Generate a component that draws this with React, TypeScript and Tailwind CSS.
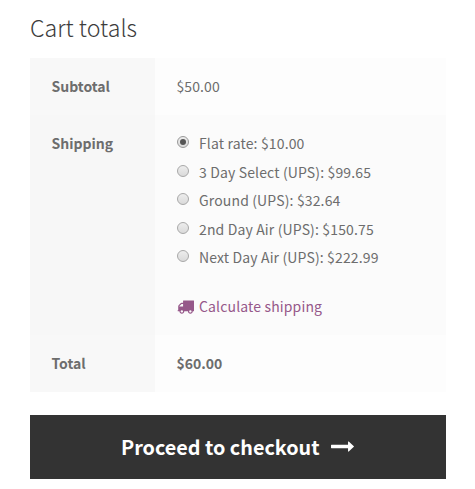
import React, { useState } from 'react';
import clsx from 'clsx';

interface ShippingMethod {
  id: string;
  label: string;
  price: string;
}

const shippingMethods: ShippingMethod[] = [
  { id: 'flat_rate', label: 'Flat rate', price: '$10.00' },
  { id: 'ups_3day', label: '3 Day Select (UPS)', price: '$99.65' },
  { id: 'ups_ground', label: 'Ground (UPS)', price: '$32.64' },
  { id: 'ups_2nd_day', label: '2nd Day Air (UPS)', price: '$150.75' },
  { id: 'ups_next_day', label: 'Next Day Air (UPS)', price: '$222.99' },
];

const TruckIcon: React.FC<{ className?: string }> = ({ className }) => (
  <svg viewBox="0 0 1792 1792" fill="currentColor" className={className}>
    <path d="M640 1408q0-52-38-90t-90-38-90 38-38 90 38 90 90 38 90-38 38-90zm-384-512h384v-256h-158q-13 0-22 9l-195 195q-9 9-9 22v30zm1280 512q0-52-38-90t-90-38-90 38-38 90 38 90 90 38 90-38 38-90zm256-1088v1024q0 15-4 26.5t-13.5 18.5-16.5 11.5-23.5 6-22.5 2-25.5 0-22.5-.5q0 106-75 181t-181 75-181-75-75-181h-384q0 106-75 181t-181 75-181-75-75-181h-64q-3 0-22.5.5t-25.5 0-22.5-2-23.5-6-16.5-11.5-13.5-18.5-4-26.5q0-26 19-45t45-19v-320q0-8-.5-35t0-38 2.5-34.5 6.5-37 14-30.5 22.5-30l198-198q19-19 50.5-32t58.5-13h160v-192q0-26 19-45t45-19h1024q26 0 45 19t19 45z" />
  </svg>
);

const LongArrowIcon: React.FC<{ className?: string }> = ({ className }) => (
  <svg viewBox="0 480 1728 832" fill="currentColor" className={className}>
    <path d="M1728 893q0 14-10 24l-384 354q-16 14-35 6-19-9-19-29v-224h-1248q-14 0-23-9t-9-23v-192q0-14 9-23t23-9h1248v-224q0-21 19-29t35 5l384 350q10 10 10 23z" />
  </svg>
);

const Radio: React.FC<{ checked: boolean }> = ({ checked }) => (
  <span
    className={clsx(
      'mb-[2px] flex h-3 w-3 items-center justify-center rounded-full border bg-linear-to-b from-[#ededed] to-[#dadada]',
      checked ? 'border-[#999]' : 'border-[#a8a8a8]'
    )}
  >
    {checked && <span className="h-1.5 w-1.5 rounded-full bg-[#555]" />}
  </span>
);

export default function App() {
  const [selected, setSelected] = useState('flat_rate');

  return (
    <div className="h-[489px] w-[475px] bg-white pl-[30px] font-['Noto_Sans_CJK_SC',sans-serif] text-[14px] text-[#6d6d6d]">
      <h2 className="h-[58px] pt-[9px] font-['Noto_Sans_CJK_SC_Light','Noto_Sans_CJK_SC',sans-serif] text-[23.2px] font-extralight leading-[36px] text-[#3c3c3c]">Cart totals</h2>

      <div className="grid w-[416px] grid-cols-[125px_1fr] grid-rows-[57px_220px_57px]">
        <div className="bg-[#f8f8f8] pl-[21.5px] pt-[15px] font-bold leading-[26px]">Subtotal</div>
        <div className="bg-[#fdfdfd] pl-[21.5px] pt-[15px] leading-[26px] tracking-[0.1px]">$50.00</div>

        <div className="bg-[#f7f7f7] pl-[21.5px] pt-[15px] font-bold leading-[26px]">Shipping</div>
        <div className="bg-[#fbfbfb] pl-[22px] pt-[15px] tracking-[0.14px]">
          <ul className="h-[143px]">
            {shippingMethods.map(method => (
              <li key={method.id} className="h-[28.6px]">
                <button onClick={() => setSelected(method.id)} className="flex h-[26px] items-center gap-[10px] whitespace-nowrap">
                  <Radio checked={selected === method.id} />
                  <span className="leading-[26px]">{method.label}: {method.price}</span>
                </button>
              </li>
            ))}
          </ul>
          <button className="mt-[20px] flex items-center gap-[5px] text-[#96588a]">
            <TruckIcon className="h-[17px] w-[17px]" />
            <span className="leading-[26px]">Calculate shipping</span>
          </button>
        </div>

        <div className="bg-[#f8f8f8] pl-[21.5px] pt-[15px] font-bold leading-[26px]">Total</div>
        <div className="bg-[#fdfdfd] pl-[21.5px] pt-[15px] font-bold leading-[26px]">$60.00</div>
      </div>

      <button className="mt-[23px] flex h-[64px] w-[416px] items-center justify-center gap-[11.5px] bg-[#333] pr-[1px] text-[19.8px] font-bold text-white">
        <span className="leading-[30px]">Proceed to checkout</span>
        <LongArrowIcon className="w-[23px]" />
      </button>
    </div>
  );
}
